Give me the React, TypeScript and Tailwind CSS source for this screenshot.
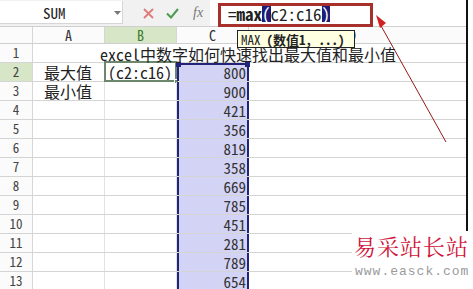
import React from "react";

const MONO = '"Noto Sans Mono CJK SC", "Liberation Mono", "Noto Sans CJK SC", monospace';

function Cell({
  w,
  children,
  className = "",
  noRight = false,
}: {
  w: string;
  children?: React.ReactNode;
  className?: string;
  noRight?: boolean;
}) {
  return (
    <div
      className={`${w} h-full shrink-0 relative flex items-end ${noRight ? "" : "border-r border-[#e2e2e2]"} ${className}`}
    >
      {children}
    </div>
  );
}

export default function App() {
  const values = [800, 900, 421, 356, 819, 358, 669, 785, 451, 281, 789, 654];
  const rows = Array.from({ length: 13 }, (_, i) => i + 1);

  return (
    <div
      className="relative w-[473px] h-[289px] overflow-hidden bg-white text-[#222]"
      style={{ fontFamily: MONO }}
    >
      <div className="flex">
        <div className="w-[466px] shrink-0">
          {/* formula bar */}
          <div className="h-[27px] flex bg-[#f1f1f1] border-b border-[#cfcfcf]">
            <div className="w-[123px] h-[23px] mt-[1px] bg-white border-r border-b border-[#d6d6d6] relative flex items-center">
              <span className="ml-[43px] text-[15px] leading-none">SUM</span>
              <svg className="absolute left-[114px] top-[10px]" width="7" height="4" viewBox="0 0 7 4">
                <path d="M0 0 L7 0 L3.5 4 Z" fill="#777" />
              </svg>
            </div>
            <div className="w-[87px] h-full flex items-center">
              <svg className="ml-[20px]" width="11" height="11" viewBox="0 0 11 11">
                <path d="M1 1 L10 10 M10 1 L1 10" stroke="#e07a7a" strokeWidth="1.8" />
              </svg>
              <svg className="ml-[12px]" width="13" height="11" viewBox="0 0 13 11">
                <path d="M1 5.5 L5 9.5 L12 1" stroke="#4d9a4d" strokeWidth="2" fill="none" />
              </svg>
              <span
                className="ml-[14px] text-[14px] italic text-[#777] leading-none"
                style={{ fontFamily: '"Liberation Serif", serif' }}
              >
                fx
              </span>
            </div>
            <div className="flex-1 h-full bg-white flex items-center pl-[18px] text-[17px] leading-none">
              <span>=</span>
              <span className="font-bold">max</span>
              <span className="bg-[#1c1c78] text-white">(</span>
              <span>c2:c16</span>
              <span className="bg-[#1c1c78] text-white">)</span>
            </div>
          </div>

          {/* column header */}
          <div className="h-[17px] flex border-b border-[#cfcfcf] bg-[#fbfbfb] text-[14px] text-[#333]">
            <div className="w-[33px] h-full border-r border-[#d6d6d6]" />
            <div className="w-[72px] h-full border-r border-[#d6d6d6] flex items-center justify-center">A</div>
            <div className="w-[72px] h-full border-r border-[#d6d6d6] flex items-center justify-center bg-[#d6e6c6] text-[#3a7a2a]">
              B
            </div>
            <div className="w-[72px] h-full border-r border-[#d6d6d6] flex items-center justify-center">C</div>
            <div className="flex-1 h-full flex items-center justify-center pr-[10px]">D</div>
          </div>

          {/* rows */}
          {rows.map((r) => {
            const inSel = r >= 2;
            return (
              <div key={r} className="h-[19px] flex border-b border-[#d4d4d4]">
                <div
                  className={`w-[33px] h-full shrink-0 border-r border-[#d6d6d6] flex items-center justify-center text-[13px] text-[#444] ${
                    r === 2 ? "bg-[#d6e6c6] text-[#3a7a2a]" : "bg-[#fbfbfb]"
                  }`}
                >
                  {r}
                </div>
                {r === 1 ? (
                  <>
                    <Cell w="w-[72px]" noRight>
                      <span className="absolute left-[67px] bottom-0 whitespace-nowrap text-[16px] leading-none z-10">
                        excel中数字如何快速找出最大值和最小值
                      </span>
                    </Cell>
                    <Cell w="w-[72px]" noRight />
                    <Cell w="w-[72px]" noRight />
                    <div className="flex-1" />
                  </>
                ) : (
                  <>
                    <Cell w="w-[72px]">
                      {r === 2 && <span className="ml-[11px] mb-[1px] text-[16px] leading-none">最大值</span>}
                      {r === 3 && <span className="ml-[11px] mb-[1px] text-[16px] leading-none">最小值</span>}
                    </Cell>
                    <Cell w="w-[72px]">
                      {r === 2 && (
                        <>
                          <span className="ml-[3px] mb-[1px] text-[16px] leading-none">(c2:c16)</span>
                          <div className="absolute -left-[1px] -top-[2px] w-[73px] h-[21px] border-2 border-[#6d876d]" />
                          <div className="absolute -right-[3px] -bottom-[3px] w-[5px] h-[5px] bg-[#6d876d] border border-white" />
                        </>
                      )}
                    </Cell>
                    <div
                      className={`w-[72px] h-full shrink-0 relative flex items-end justify-end pr-[1px] ${
                        inSel ? "bg-[#d3d3f6] border-l-2 border-r-2 border-[#23237a]" : ""
                      } ${r === 2 ? "border-t-2" : ""}`}
                    >
                      <span className="mb-[1px] text-[15px] leading-none text-[#333]">{values[r - 2]}</span>
                      {r === 2 && (
                        <>
                          <div className="absolute -left-[3px] -top-[3px] w-[5px] h-[5px] bg-[#23237a]" />
                          <div className="absolute -right-[3px] -top-[3px] w-[5px] h-[5px] bg-[#23237a]" />
                        </>
                      )}
                    </div>
                    <div className="flex-1" />
                  </>
                )}
              </div>
            );
          })}
        </div>
        <div className="w-[2px] h-[289px] bg-[#111] shrink-0" />
        <div className="flex-1 bg-white" />
      </div>

      {/* red annotation box */}
      <div className="absolute left-[218px] top-[3px] w-[155px] h-[24px] border-[3px] border-[#a8302c]" />

      {/* tooltip */}
      <div className="absolute left-[237px] top-[30px] w-[118px] h-[18px] pl-[3px] bg-[#ffffe1] border border-[#222] flex items-center text-[13px] leading-none whitespace-nowrap">
        <span>MAX</span>
        <span className="font-bold ml-[6px]">(数值1, ...)</span>
      </div>

      {/* arrow */}
      <svg className="absolute left-0 top-0" width="473" height="289" viewBox="0 0 473 289">
        <line x1="446" y1="142" x2="380" y2="24" stroke="#9a1818" strokeWidth="1" />
        <path d="M376 15 L386 23 L380 28 Z" fill="#d21f1f" />
      </svg>

      {/* watermark */}
      <div className="absolute left-[352px] top-[231px] w-[121px] h-[58px] bg-white flex flex-col items-start">
        <span
          className="mt-[4px] ml-[2px] text-[22px] leading-none text-[#d0143a] tracking-[1px]"
          style={{ fontFamily: '"Noto Serif CJK SC", "Noto Sans CJK SC", serif' }}
        >
          易采站长站
        </span>
        <span
          className="mt-[8px] ml-[3px] text-[13px] leading-none text-[#9a9a9a] tracking-[1px]"
          style={{ fontFamily: '"Liberation Mono", monospace' }}
        >
          www.easck.com
        </span>
      </div>
    </div>
  );
}
